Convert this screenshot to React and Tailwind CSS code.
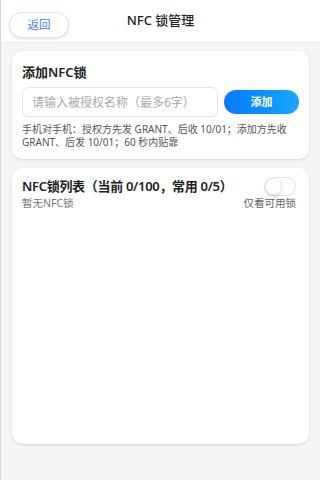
import { useState } from "react";

export default function App() {
  const [onlyAvailable, setOnlyAvailable] = useState(false);

  return (
    <div
      className="min-h-[480px] border-l border-gray-300 bg-[#f4f5f7]"
      style={{ fontFamily: '"Noto Sans", "Noto Sans CJK SC", sans-serif' }}
    >
      <header className="relative flex h-[43px] items-center justify-center border-b border-[#e8eaee] bg-white">
        <button className="absolute left-[8px] top-[12px] flex h-[26px] w-[60px] items-center justify-center rounded-full border border-[#d6e6ff] bg-white text-[11.5px] text-[#3b82f6] shadow-sm">
          返回
        </button>
        <h1 className="text-[13px] font-medium text-[#222]">NFC 锁管理</h1>
      </header>

      <div className="flex flex-col gap-[9px] px-[11px] pt-[8px]">
        <section className="rounded-[10px] bg-white px-[10px] pb-[10px] pt-[11px] shadow-sm">
          <h2 className="text-[13px] font-semibold leading-[20px] text-[#222]">添加NFC锁</h2>
          <div className="mt-[5px] flex items-center gap-[6px]">
            <input
              className="h-[30px] w-[196px] rounded-[6px] border border-[#e3e5e8] px-[9px] text-[12px] text-[#333] outline-none placeholder:text-[#a6a9ae]"
              placeholder="请输入被授权名称（最多6字）"
            />
            <button className="h-[24px] flex-1 rounded-full bg-gradient-to-r from-[#0a78ff] to-[#1aa6ff] text-[11px] font-bold text-white">
              添加
            </button>
          </div>
          <p className="mt-[6px] text-[10px] leading-[13px] text-[#555]">
            手机对手机：授权方先发 GRANT、后收 10/01；添加方先收 GRANT、后发 10/01；60 秒内贴靠
          </p>
        </section>

        <section className="h-[276px] rounded-[10px] bg-white pl-[10px] pr-[13px] pt-[8px] shadow-sm">
          <div className="flex items-center justify-between">
            <h2 className="whitespace-nowrap text-[13px] font-semibold leading-[20px] tracking-[-0.3px] text-[#222]">
              NFC锁列表（当前 0/100，常用 0/5）
            </h2>
            <button
              onClick={() => setOnlyAvailable(!onlyAvailable)}
              className={`relative h-[19px] w-[32px] shrink-0 rounded-full border ${
                onlyAvailable ? "border-[#1a8cff] bg-[#1a8cff]" : "border-[#e3e3e3] bg-white"
              }`}
            >
              <span
                className={`absolute top-[0px] h-[17px] w-[17px] rounded-full border border-[#e6e6e6] bg-white shadow-md ${
                  onlyAvailable ? "left-[13px]" : "left-[0px]"
                }`}
              />
            </button>
          </div>
          <div className="flex items-center justify-between">
            <p className="text-[10.5px] leading-[14px] text-[#777]">暂无NFC锁</p>
            <span className="text-[10.5px] leading-[14px] text-[#666]">仅看可用锁</span>
          </div>
        </section>
      </div>
    </div>
  );
}
